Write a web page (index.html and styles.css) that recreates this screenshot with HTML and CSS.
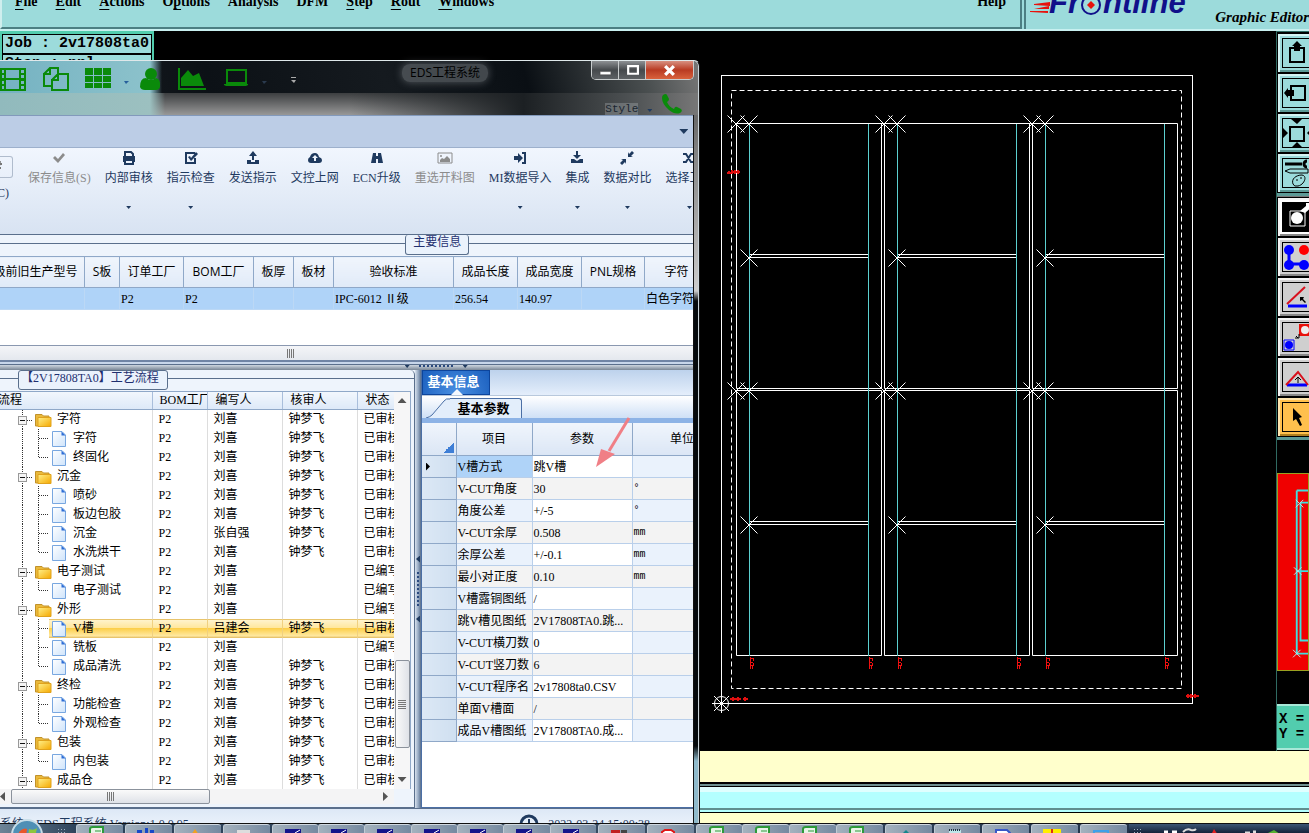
FILE: index.html
```html
<!DOCTYPE html>
<html lang="zh-CN">

<head>
    <meta charset="UTF-8">
    <meta name="viewport" content="width=device-width, initial-scale=1.0">
    <title>EDS工程系统</title>
    <link rel="stylesheet" href="styles.css">
</head>

<body>
    <!-- shared icons -->
    <svg class="defs" aria-hidden="true">
        <linearGradient id="gold" x1="0" y1="0" x2="1" y2="1">
            <stop offset="0" stop-color="#fff08a" />
            <stop offset="1" stop-color="#f5a800" />
        </linearGradient>
        <linearGradient id="paper" x1="0" y1="0" x2="1" y2="1">
            <stop offset="0" stop-color="#ffffff" />
            <stop offset="1" stop-color="#cfe4fb" />
        </linearGradient>
        <symbol id="node" viewBox="0 0 36 19">
            <path d="M4.500 0V19M9 10.500H14" stroke="#333" stroke-dasharray="1 1" />
            <rect x="0.500" y="6.500" width="8" height="8" fill="#f4f4f4" stroke="#999" />
            <path d="M2 10.500H7" stroke="#111" />
            <path d="M17.500 4.500H24L25.500 6H31V16H17.500Z" fill="#e9b93c" stroke="#c1912a" />
            <path d="M20 7.500H33V16.500H20Z" fill="url(#gold)" stroke="#e0a21c" />
        </symbol>
        <symbol id="leaf" viewBox="0 0 52 19">
            <path d="M4.500 0V19M20.500 0V19M21 9.500H30" stroke="#333" stroke-dasharray="1 1" fill="none" />
            <path d="M34.500 2.500H44L47.500 6V17.500H34.500Z" fill="url(#paper)" stroke="#78a7e0" />
            <path d="M43.500 2.500V6.500H47.500Z" fill="#2f6fd6" />
        </symbol>
        <symbol id="last" viewBox="0 0 52 19">
            <path d="M4.500 0V19M20.500 0V9.500H30" stroke="#333" stroke-dasharray="1 1" fill="none" />
            <path d="M34.500 2.500H44L47.500 6V17.500H34.500Z" fill="url(#paper)" stroke="#78a7e0" />
            <path d="M43.500 2.500V6.500H47.500Z" fill="#2f6fd6" />
        </symbol>
        <symbol id="cross" viewBox="-9 -9 18 18">
            <path d="M-8.500 -8.500L8.500 8.500M-8.500 8.500L8.500 -8.500" stroke="#fff" />
        </symbol>
        <symbol id="tag" viewBox="0 0 6 12">
            <path d="M1.500 0V12M1 1.500H5M4.500 1V4M1 5.500H4M4.500 6V9M1 8.500H5M3.500 9V12" stroke="#f01010" fill="none" />
        </symbol>
        <symbol id="doc" viewBox="0 0 20 12">
            <path d="M3 12V4Q3 2 6 2H16V12Z" fill="#e8f4e8" stroke="#2d9a3a" stroke-width="2" />
            <path d="M8 6H14" stroke="#2d9a3a" />
        </symbol>
        <symbol id="term" viewBox="0 0 20 12">
            <path d="M2 4H18V12H2Z" fill="#14148a" />
            <path d="M12 8L17 5" stroke="#fff" />
        </symbol>
    </svg>

    <!-- Graphic Editor -->
    <div class="editor">
        <header class="topbar">
            <nav class="menu">
                <a href="#"><u>F</u>ile</a>
                <a href="#"><u>E</u>dit</a>
                <a href="#"><u>A</u>ctions</a>
                <a href="#">O<u>p</u>tions</a>
                <a href="#">Analysis</a>
                <a href="#">DFM</a>
                <a href="#"><u>S</u>tep</a>
                <a href="#"><u>R</u>out</a>
                <a href="#"><u>W</u>indows</a>
                <a href="#" class="help">Help</a>
            </nav>
            <div class="brand">
                <svg class="logo" viewBox="0 0 164 18">
                    <path d="M4 4L20 2V6L4 5ZM0 11H18V13L0 12ZM4 9L19 6V9Z" fill="#e8120c" />
                    <text x="19" y="13" class="logo-text">Fr</text>
                    <circle cx="61" cy="5" r="9" fill="#a0dcdc" stroke="#10108a" stroke-width="2" />
                    <path d="M61 1L65 5L61 9L57 5Z" fill="#e8120c" />
                    <text x="73" y="13" class="logo-text">ntline</text>
                </svg>
                <span class="product">Graphic Editor</span>
            </div>
        </header>

        <main class="work">
            <div class="job">
                <p>Job : 2v17808ta0</p>
                <p>Step : pnl</p>
            </div>
            <svg class="board" viewBox="700 31 576 720" fill="none" stroke="#fff">
                <rect x="721.500" y="75.500" width="471" height="628" />
                <rect x="731.500" y="90.500" width="450" height="598" stroke-dasharray="5 3" />
                <path d="M736.500 123.500H881.500V388.500H736.500ZM884.500 123.500H1029.500V388.500H884.500ZM1032.500 123.500H1177.500V388.500H1032.500Z" />
                <path d="M736.500 390.500H881.500V655.500H736.500ZM884.500 390.500H1029.500V655.500H884.500ZM1032.500 390.500H1177.500V655.500H1032.500Z" />
                <path d="M881 123.500H885M1029 123.500H1033" />
                <path d="M749 254.500H869M749 257.500H869M897 254.500H1017M897 257.500H1017M1045 254.500H1165M1045 257.500H1165" />
                <path d="M749 521.500H869M749 524.500H869M897 521.500H1017M897 524.500H1017M1045 521.500H1165M1045 524.500H1165" />
                <path d="M749.500 124V656M868.500 124V656M897.500 124V656M1016.500 124V656M1045.500 124V656M1164.500 124V656" stroke="#5cd0d0" />
                <use href="#cross" x="727" y="115" width="18" height="18" />
                <use href="#cross" x="740" y="115" width="18" height="18" />
                <use href="#cross" x="875" y="115" width="18" height="18" />
                <use href="#cross" x="888" y="115" width="18" height="18" />
                <use href="#cross" x="1023" y="115" width="18" height="18" />
                <use href="#cross" x="1036" y="115" width="18" height="18" />
                <use href="#cross" x="727" y="382" width="18" height="18" />
                <use href="#cross" x="740" y="382" width="18" height="18" />
                <use href="#cross" x="875" y="382" width="18" height="18" />
                <use href="#cross" x="888" y="382" width="18" height="18" />
                <use href="#cross" x="1023" y="382" width="18" height="18" />
                <use href="#cross" x="1036" y="382" width="18" height="18" />
                <use href="#cross" x="740" y="249" width="18" height="18" />
                <use href="#cross" x="888" y="249" width="18" height="18" />
                <use href="#cross" x="1036" y="249" width="18" height="18" />
                <use href="#cross" x="740" y="516" width="18" height="18" />
                <use href="#cross" x="888" y="516" width="18" height="18" />
                <use href="#cross" x="1036" y="516" width="18" height="18" />
                <use href="#tag" x="749" y="657" width="6" height="12" />
                <use href="#tag" x="868" y="657" width="6" height="12" />
                <use href="#tag" x="897" y="657" width="6" height="12" />
                <use href="#tag" x="1016" y="657" width="6" height="12" />
                <use href="#tag" x="1045" y="657" width="6" height="12" />
                <use href="#tag" x="1164" y="657" width="6" height="12" />
                <path d="M727 173H731M729 171V174M732 172H740M732 170V174M735 170V174M738 170V174M1186 696H1199M1188 694V698M1191 694V698M1195 694V698M730 699H741M733 697V701M738 697V701M743 699H748M745 697V701" stroke="#e01010" stroke-width="2" />
                <circle cx="721.500" cy="703.500" r="7" />
                <path d="M712 703.500H731M721.500 694V713M714 696L729 711M714 711L729 696" />
            </svg>
            <aside class="side">
                <div class="tools">
                    <button class="tool" aria-label="Pan up"><svg viewBox="0 0 38 38"><path d="M12 14H26V28H12Z" fill="none" stroke="#000" stroke-width="2" /><path d="M14 12L19 7L24 12H22V17H16V12Z" /></svg></button>
                    <button class="tool" aria-label="Pan left"><svg viewBox="0 0 38 38"><path d="M13 12H27V26H13Z" fill="none" stroke="#000" stroke-width="2" /><path d="M6 19L10 14V16H16V22H10V24Z" /></svg></button>
                    <button class="tool" aria-label="Zoom home"><svg viewBox="0 0 38 38"><path d="M12 13H26V27H12Z" fill="none" stroke="#000" stroke-width="2" /><path d="M13 5H24L19 10ZM14 33H24L19 28ZM5 14L10 19L5 24ZM34 14L29 19L34 24Z" /></svg></button>
                    <button class="tool" aria-label="Options"><svg viewBox="0 0 38 38"><path d="M7 10H24" stroke="#000" stroke-width="3" /><path d="M29 7A3 3 0 1 0 29 13" fill="none" stroke="#000" stroke-width="3" /><path d="M7 17L12 15H30V19H12ZM15 30C13 25 18 21 24 21C30 22 26 31 20 32Q16 33 15 30M18 26H20M22 24H24" fill="none" stroke="#000" /></svg></button>
                </div>
                <div class="tools gray">
                    <button class="tool dark" aria-label="Add feature"><svg viewBox="0 0 38 38"><path d="M4 4H34V34H4Z" /><path d="M12 13H27V28H12Z" fill="#000" stroke="#fff" /><path d="M22 13L28 8V4H34V9L27 15Z" fill="#fff" /><circle cx="19" cy="20" r="6" fill="#fff" /></svg></button>
                    <button class="tool" aria-label="Nets"><svg viewBox="0 0 38 38"><path d="M11 12V26H26" fill="none" stroke="#00f" stroke-width="3" /><circle cx="11" cy="12" r="5" fill="#00f" /><circle cx="11" cy="27" r="5" fill="#00f" /><circle cx="26" cy="27" r="5" fill="#00f" /><circle cx="26" cy="12" r="5" fill="#f00" /></svg></button>
                    <button class="tool" aria-label="Angle"><svg viewBox="0 0 38 38"><path d="M10 28H29" stroke="#00f" stroke-width="3" /><path d="M9 26L27 9" stroke="#d8101c" stroke-width="2" /><path d="M22 19H26L25 21L28 24L27 25L24 22L22 23Z" /></svg></button>
                    <button class="tool" aria-label="Move"><svg viewBox="0 0 38 38"><path d="M6 22H16V32H6Z" fill="none" stroke="#00f" /><circle cx="11" cy="27" r="4" fill="#00f" /><path d="M22 7H32V17H22Z" fill="#e8120c" stroke="#e8120c" stroke-width="2" /><circle cx="27" cy="12" r="4" fill="#eee" /><path d="M17 20H21V16M18 18L20 20" stroke="#000" fill="none" /></svg></button>
                    <button class="tool" aria-label="Triangle"><svg viewBox="0 0 38 38"><path d="M9 27H29" stroke="#00f" stroke-width="3" /><path d="M8 27L20 14L30 27" fill="none" stroke="#d8101c" stroke-width="2" /><path d="M20 19V25M17 22L20 19L23 22" stroke="#000" fill="none" /></svg></button>
                    <button class="tool amber" aria-label="Select"><svg viewBox="0 0 38 38"><path d="M15 10L24 19L21 20L24 27L22 28L18 21L15 23Z" /></svg></button>
                </div>
                <svg class="overview" viewBox="0 0 32 198">
                    <path d="M20 12H32M20 12V186H32M24 25H32M24 25V172H32M20 98H32" fill="none" stroke="#3fe0e0" stroke-width="2" />
                    <path d="M19 22L27 30M19 30L27 22M17 94L25 102M17 102L25 94M16 182L24 190M16 190L24 182" stroke="#bfeaea" />
                </svg>
                <div class="coords">
                    <p>X = 0</p>
                    <p>Y = 0</p>
                </div>
            </aside>
        </main>
        <div class="input-line"></div>
        <div class="message-line"></div>
        <div class="last-line"></div>
    </div>

    <!-- EDS window -->
    <section class="eds">
        <header class="title-bar">
            <svg class="quick" viewBox="0 0 310 34" fill="#0a8a0a">
                <path d="M0 7H26V30H0ZM2 9V12H4V9ZM2 14V17H4V14ZM2 20V23H4V20ZM2 25V28H4V25ZM6 9V17H19V9ZM6 19V28H19V19ZM21 9V12H24V9ZM21 14V17H24V14ZM21 20V23H24V20ZM21 25V28H24V25Z" fill-rule="evenodd" />
                <path d="M44 13L50 7H58V13M50 7V13H44V25H52M52 19L58 13H68V29H52V19H58V13" fill="none" stroke="#0a8a0a" stroke-width="2" />
                <path d="M85 7H93V14H85ZM94 7H102V14H94ZM103 7H111V14H103ZM85 15H93V21H85ZM94 15H102V21H94ZM103 15H111V21H103ZM85 22H93V27H85ZM94 22H102V27H94ZM103 22H111V27H103Z" />
                <circle cx="151" cy="13" r="6" />
                <path d="M140 26Q140 17 146 17Q151 21 156 17Q161 18 160 26Q159 29 156 29H145Q141 29 140 26Z" />
                <path d="M178 7H180V27H206V29H178ZM181 25V17L188 9L193 15L199 12L204 25Z" />
                <path d="M227 9H246V22H227Z" fill="none" stroke="#0a8a0a" stroke-width="2" />
                <path d="M224 23H248V24L246 25H226L224 24Z" />
                <path d="M124 20H129L126 23Z" fill="#27609c" />
                <path d="M262 20H267L264 23Z" fill="#2a3a4e" />
                <path d="M291 16H296V17H291ZM291 19H296L294 22Z" fill="#aaa" />
            </svg>
            <h1>EDS工程系统</h1>
            <div class="caption-buttons">
                <button aria-label="最小化"><svg viewBox="0 0 12 12"><path d="M1 7H11V10H1Z" fill="#fff" stroke="#444" stroke-width="0.500" /></svg></button>
                <button aria-label="最大化"><svg viewBox="0 0 12 12"><path d="M2 2H11V9H2Z" fill="none" stroke="#fff" stroke-width="2" /></svg></button>
                <button class="close" aria-label="关闭"><svg viewBox="0 0 12 12"><path d="M2 2L10 10M10 2L2 10" stroke="#fff" stroke-width="3" /></svg></button>
            </div>
            <div class="style-picker">
                <span>Style</span>
                <i class="caret"></i>
                <svg class="phone" viewBox="0 0 22 22"><path d="M2 2Q5 0 6 2L8 6Q8 8 6 9Q8 14 13 16Q14 13 16 14L20 16Q22 18 19 20Q14 22 8 17Q1 11 1 5Q1 3 2 2Z" fill="#0a8a0a" /></svg>
            </div>
        </header>

        <div class="client">
            <div class="ribbon-tabs"><i class="caret big"></i></div>
            <div class="ribbon">
                <div class="refresh"><button aria-label="刷新"><svg viewBox="0 0 14 14"><path d="M1 4H10M8 1L6 12M3 8H9" fill="none" stroke="#777" stroke-width="2" /></svg></button><span>(C)</span></div>
                <button class="cmd off"><svg viewBox="0 0 16 16"><path d="M2 8L4 6L7 9L12 3L14 5L7 13Z" /></svg><span>保存信息(S)</span></button>
                <button class="cmd"><svg viewBox="0 0 16 16"><path d="M4 7V2H10L12 4V7M4 10H12V14H4Z" fill="none" stroke="#1f3a5f" stroke-width="2" /><path d="M2 6H14V12H12V9H4V12H2Z" /></svg><span>内部审核</span><i class="caret"></i></button>
                <button class="cmd"><svg viewBox="0 0 16 16"><path d="M12 8V13H3V3H12" fill="none" stroke="#1f3a5f" stroke-width="2" /><path d="M5 7L7 6L8 8L13 2L15 4L8 11Z" /></svg><span>指示检查</span><i class="caret"></i></button>
                <button class="cmd"><svg viewBox="0 0 16 16"><path d="M8 1L12 6H9V10H7V6H4ZM2 10H6V12H10V10H14V14H2Z" /></svg><span>发送指示</span></button>
                <button class="cmd"><svg viewBox="0 0 16 16"><path d="M4 13Q1 13 1 10Q1 8 3 7Q4 3 8 3Q11 3 12 7Q15 8 15 10Q15 13 12 13ZM8 5L5 8H7V11H9V8H11Z" fill-rule="evenodd" /></svg><span>文控上网</span></button>
                <button class="cmd"><svg viewBox="0 0 16 16"><path d="M4 3H7V6H9V3H12L14 13H9V9H7V13H2Z" /></svg><span>ECN升级</span></button>
                <button class="cmd off"><svg viewBox="0 0 16 16"><path d="M1 3H15V13H1Z" fill="none" stroke="#8c8c8c" /><path d="M3 12V10L5 8L7 9L10 6L13 9V12Z" /><circle cx="4" cy="6" r="1" /></svg><span>重选开料图</span></button>
                <button class="cmd"><svg viewBox="0 0 16 16"><path d="M2 6H6V3L11 8L6 13V10H2ZM10 2H14V14H10V12H12V4H10Z" /></svg><span>MI数据导入</span><i class="caret"></i></button>
                <button class="cmd"><svg viewBox="0 0 16 16"><path d="M7 1H9V5H12L8 9L4 5H7ZM2 9H5L8 11L11 9H14V13H2Z" /></svg><span>集成</span><i class="caret"></i></button>
                <button class="cmd"><svg viewBox="0 0 16 16"><path d="M9 2L10 4L13 1L15 3L12 6L14 7H9ZM7 9V14L6 12L3 15L1 13L4 10L2 9Z" /></svg><span>数据对比</span><i class="caret"></i></button>
                <button class="cmd"><svg viewBox="0 0 16 16"><path d="M2 4H5L10 12H14M2 12H5L10 4H14" fill="none" stroke="#1f3a5f" stroke-width="2" /></svg><span>选择工序</span><i class="caret"></i></button>
            </div>

            <div class="group-head"><span class="group-title">主要信息</span></div>
            <div class="main-info">
                <table class="info">
                    <thead>
                        <tr><th>升级前旧生产型号</th><th>S板</th><th>订单工厂</th><th>BOM工厂</th><th>板厚</th><th>板材</th><th>验收标准</th><th>成品长度</th><th>成品宽度</th><th>PNL规格</th><th>字符</th></tr>
                    </thead>
                    <tbody>
                        <tr><td></td><td></td><td>P2</td><td>P2</td><td></td><td></td><td>IPC-6012 Ⅱ级</td><td>256.54</td><td>140.97</td><td></td><td>白色字符</td></tr>
                    </tbody>
                </table>
            </div>
            <div class="scroll-x wide"><i class="grip"></i></div>
            <div class="splitter"><i class="caret"></i><i class="dots"></i><i class="caret"></i></div>

            <div class="panes">
                <section class="flow">
                    <div class="group-head"><span class="group-title">【2V17808TA0】工艺流程</span></div>
                    <div class="flow-body">
                        <table class="tree">
                            <thead>
                                <tr><th>工艺流程</th><th>BOM工厂</th><th>编写人</th><th>核审人</th><th>状态</th></tr>
                            </thead>
                            <tbody>
                                <tr><td><svg class="node"><use href="#node" /></svg>字符</td><td>P2</td><td>刘喜</td><td>钟梦飞</td><td>已审核</td></tr>
                                <tr><td><svg class="leaf"><use href="#leaf" /></svg>字符</td><td>P2</td><td>刘喜</td><td>钟梦飞</td><td>已审核</td></tr>
                                <tr><td><svg class="leaf"><use href="#last" /></svg>终固化</td><td>P2</td><td>刘喜</td><td>钟梦飞</td><td>已审核</td></tr>
                                <tr><td><svg class="node"><use href="#node" /></svg>沉金</td><td>P2</td><td>刘喜</td><td>钟梦飞</td><td>已审核</td></tr>
                                <tr><td><svg class="leaf"><use href="#leaf" /></svg>喷砂</td><td>P2</td><td>刘喜</td><td>钟梦飞</td><td>已审核</td></tr>
                                <tr><td><svg class="leaf"><use href="#leaf" /></svg>板边包胶</td><td>P2</td><td>刘喜</td><td>钟梦飞</td><td>已审核</td></tr>
                                <tr><td><svg class="leaf"><use href="#leaf" /></svg>沉金</td><td>P2</td><td>张自强</td><td>钟梦飞</td><td>已审核</td></tr>
                                <tr><td><svg class="leaf"><use href="#last" /></svg>水洗烘干</td><td>P2</td><td>刘喜</td><td>钟梦飞</td><td>已审核</td></tr>
                                <tr><td><svg class="node"><use href="#node" /></svg>电子测试</td><td>P2</td><td>刘喜</td><td></td><td>已编写</td></tr>
                                <tr><td><svg class="leaf"><use href="#last" /></svg>电子测试</td><td>P2</td><td>刘喜</td><td></td><td>已编写</td></tr>
                                <tr><td><svg class="node"><use href="#node" /></svg>外形</td><td>P2</td><td>刘喜</td><td></td><td>已编写</td></tr>
                                <tr class="selected"><td><svg class="leaf"><use href="#leaf" /></svg>V槽</td><td>P2</td><td>吕建会</td><td>钟梦飞</td><td>已审核</td></tr>
                                <tr><td><svg class="leaf"><use href="#leaf" /></svg>铣板</td><td>P2</td><td>刘喜</td><td></td><td>已编写</td></tr>
                                <tr><td><svg class="leaf"><use href="#last" /></svg>成品清洗</td><td>P2</td><td>刘喜</td><td>钟梦飞</td><td>已审核</td></tr>
                                <tr><td><svg class="node"><use href="#node" /></svg>终检</td><td>P2</td><td>刘喜</td><td>钟梦飞</td><td>已审核</td></tr>
                                <tr><td><svg class="leaf"><use href="#leaf" /></svg>功能检查</td><td>P2</td><td>刘喜</td><td>钟梦飞</td><td>已审核</td></tr>
                                <tr><td><svg class="leaf"><use href="#last" /></svg>外观检查</td><td>P2</td><td>刘喜</td><td>钟梦飞</td><td>已审核</td></tr>
                                <tr><td><svg class="node"><use href="#node" /></svg>包装</td><td>P2</td><td>刘喜</td><td>钟梦飞</td><td>已审核</td></tr>
                                <tr><td><svg class="leaf"><use href="#last" /></svg>内包装</td><td>P2</td><td>刘喜</td><td>钟梦飞</td><td>已审核</td></tr>
                                <tr><td><svg class="node"><use href="#node" /></svg>成品仓</td><td>P2</td><td>刘喜</td><td>钟梦飞</td><td>已审核</td></tr>
                            </tbody>
                        </table>
                        <div class="scroll-y"><i class="arrow up"></i><div class="thumb"><i class="grip"></i></div><i class="arrow down"></i></div>
                    </div>
                    <div class="scroll-x"><i class="arrow left"></i><div class="thumb"><i class="grip"></i></div><i class="arrow right"></i></div>
                </section>
                <div class="splitter vertical"><i class="caret"></i><i class="dots"></i><i class="caret"></i></div>
                <section class="detail">
                    <div class="tabs"><button class="tab">基本信息</button></div>
                    <div class="subtabs">
                        <svg class="slant" viewBox="0 0 24 20"><path d="M0 20L4 19L18 3Q20 0 24 0V20Z" fill="#e3eefb" /><path d="M0 20Q4 19 6 17L18 3Q20 0 24 1" fill="none" stroke="#4b6fa5" /></svg>
                        <button class="subtab">基本参数</button>
                    </div>
                    <table class="params">
                        <thead>
                            <tr><th></th><th>项目</th><th>参数</th><th>单位</th></tr>
                        </thead>
                        <tbody>
                            <tr class="current"><td><i class="marker"></i></td><td>V槽方式</td><td>跳V槽</td><td></td></tr>
                            <tr><td></td><td>V-CUT角度</td><td>30</td><td>°</td></tr>
                            <tr><td></td><td>角度公差</td><td>+/-5</td><td>°</td></tr>
                            <tr><td></td><td>V-CUT余厚</td><td>0.508</td><td>mm</td></tr>
                            <tr><td></td><td>余厚公差</td><td>+/-0.1</td><td>mm</td></tr>
                            <tr><td></td><td>最小对正度</td><td>0.10</td><td>mm</td></tr>
                            <tr><td></td><td>V槽露铜图纸</td><td>/</td><td></td></tr>
                            <tr><td></td><td>跳V槽见图纸</td><td>2V17808TA0.跳...</td><td></td></tr>
                            <tr><td></td><td>V-CUT横刀数</td><td>0</td><td></td></tr>
                            <tr><td></td><td>V-CUT竖刀数</td><td>6</td><td></td></tr>
                            <tr><td></td><td>V-CUT程序名</td><td>2v17808ta0.CSV</td><td></td></tr>
                            <tr><td></td><td>单面V槽面</td><td>/</td><td></td></tr>
                            <tr><td></td><td>成品V槽图纸</td><td>2V17808TA0.成...</td><td></td></tr>
                        </tbody>
                    </table>
                    <svg class="pointer" viewBox="0 0 36 52"><path d="M34 1L14 34" stroke="#f07f86" stroke-width="3" /><path d="M1 50L6 32L20 37Z" fill="#f07f86" /></svg>
                </section>
            </div>
            <footer class="status">
                <span>系统：EDS工程系统 Version:1.0.0.95</span>
                <svg class="clock" viewBox="0 0 20 20"><circle cx="10" cy="10" r="8" fill="none" stroke="#1f3a5f" stroke-width="3" /><path d="M10 5V11H14" fill="none" stroke="#1f3a5f" stroke-width="2" /></svg>
                <time>2022-03-24 15:00:38</time>
            </footer>
        </div>
    </section>

    <!-- taskbar -->
    <div class="taskbar">
        <button class="orb" aria-label="开始"><svg viewBox="0 0 32 32"><circle cx="16" cy="16" r="15" fill="#4f8fb5" stroke="#c7dde8" stroke-width="2" /><path d="M8 13Q12 8 16 10L15 18H7Z" fill="#e8572a" /><path d="M18 10Q23 12 26 9L24 18H17Z" fill="#8cc63e" /></svg></button>
        <i class="dots"></i>
        <button class="task" aria-label="表格"><svg><use href="#doc" /></svg></button>
        <button class="task" aria-label="存储"><svg viewBox="0 0 20 12"><path d="M1 5H6V12H1ZM9 3H12V12H9ZM14 5H18V12H14Z" fill="#1848c8" /></svg></button>
        <button class="task" aria-label="播放器"><svg viewBox="0 0 20 12"><path d="M10 4L14 10H6Z" fill="#f0a020" /></svg></button>
        <button class="task" aria-label="文档"><svg viewBox="0 0 20 12"><path d="M3 5H16V12H3Z" fill="#ddd" /></svg></button>
        <div class="group">
            <button class="task" aria-label="终端 1"><svg><use href="#term" /></svg></button>
            <button class="task" aria-label="终端 2"><svg><use href="#term" /></svg></button>
            <button class="task" aria-label="终端 3"><svg><use href="#term" /></svg></button>
            <button class="task" aria-label="终端 4"><svg><use href="#term" /></svg></button>
            <button class="task" aria-label="终端 5"><svg><use href="#term" /></svg></button>
            <button class="task" aria-label="终端 6"><svg><use href="#term" /></svg></button>
            <button class="task" aria-label="终端 7"><svg><use href="#term" /></svg></button>
        </div>
        <button class="task" aria-label="图形"><svg viewBox="0 0 20 12"><path d="M2 5H11V12H2Z" fill="#c02020" /><path d="M12 5H18V12H12Z" fill="#444" /></svg></button>
        <button class="task" aria-label="阅读器"><svg viewBox="0 0 20 12"><path d="M4 12V7L7 5H13L16 7V12Z" fill="#fff" stroke="#e01818" stroke-width="2" /></svg></button>
        <div class="group small">
            <button class="task" aria-label="表格 1"><svg><use href="#doc" /></svg></button>
            <button class="task" aria-label="表格 2"><svg><use href="#doc" /></svg></button>
            <button class="task" aria-label="表格 3"><svg><use href="#doc" /></svg></button>
            <button class="task" aria-label="表格 4"><svg><use href="#doc" /></svg></button>
        </div>
        <button class="task" aria-label="工具"><svg viewBox="0 0 20 12"><path d="M10 5L14 9H6Z" fill="#13868c" /></svg></button>
        <button class="task" aria-label="记事本"><svg viewBox="0 0 20 12"><path d="M4 5H16V12H4Z" fill="#bfe6ea" /><path d="M4 5H16" stroke="#234" stroke-dasharray="1 1" stroke-width="2" /></svg></button>
        <button class="task" aria-label="文字"><svg viewBox="0 0 20 12"><path d="M3 5H14L17 8V12H3Z" fill="#fff" stroke="#3858c8" stroke-width="2" /></svg></button>
        <button class="task" aria-label="CAM"><svg viewBox="0 0 20 12"><path d="M1 4H19V12H1Z" fill="#ffee00" /><path d="M10 4V12" stroke="#e03010" stroke-width="2" /></svg></button>
        <button class="task" aria-label="截图"><svg viewBox="0 0 20 12"><path d="M3 6H17V12H3Z" fill="none" stroke="#3fa0e8" stroke-width="2" /></svg></button>
        <div class="tray">
            <i class="dots"></i>
            <svg viewBox="0 0 150 12"><path d="M14 8H18M22 8H27" stroke="#fff" stroke-width="3" /><path d="M33 8Q37 4 41 6Q44 7 46 5" stroke="#ddd" fill="none" stroke-width="2" /><path d="M64 5L68 11H61Z" fill="#e02020" /><path d="M95 9H100M103 8H106" stroke="#ddd" stroke-width="3" /><path d="M118 9L124 6L130 10V12H116Z" fill="#56b030" /></svg>
        </div>
    </div>
</body>

</html>
```
FILE: styles.css
```css
* {
    box-sizing: border-box;
}

body {
    margin: 0;
    height: 100vh;
    overflow: hidden;
    background: #000;
    font: 12px/16px "Liberation Serif", "Noto Sans CJK SC", serif;
    color: #000;
}

p, h1 {
    margin: 0;
}

button {
    margin: 0;
    padding: 0;
    border: none;
    background: none;
    font: inherit;
    color: inherit;
}

svg {
    display: block;
}

i {
    display: block;
}

table {
    border-collapse: collapse;
    table-layout: fixed;
}

th, td {
    padding: 0;
    white-space: nowrap;
    overflow: hidden;
    font-weight: normal;
    text-align: left;
}

.defs {
    position: absolute;
    width: 0;
    height: 0;
}

/* Graphic Editor */
.editor {
    display: flex;
    flex-direction: column;
    height: 100vh;
}

.topbar {
    display: flex;
    height: 31px;
    flex: none;
    border-bottom: 2px solid #c8f0f0;
    background: #9cdbdb;
}

.menu {
    flex: 1;
    display: flex;
    gap: 18px;
    padding: 0 14px 0 13px;
    border-left: 2px solid #cfeeee;
    border-right: 2px solid #4c7f83;
    border-bottom: 2px solid #4c7f83;
    height: 29px;
    overflow: hidden;
}

.menu a {
    margin-top: -6px;
    font-size: 14px;
    font-weight: bold;
    color: #000;
    text-decoration: none;
}

.menu u {
    text-underline-offset: 3px;
}

.menu .help {
    margin-left: auto;
}

.brand {
    width: 285px;
    display: flex;
    justify-content: space-between;
    margin-left: 2px;
    padding-left: 4px;
    border-left: 2px solid #4c7f83;
}

.logo {
    width: 164px;
    height: 18px;
    flex: none;
}

.logo-text {
    font: italic bold 31px "Liberation Sans", sans-serif;
    fill: #10108a;
}

.product {
    align-self: flex-end;
    margin-bottom: 3px;
    font: italic bold 15px/18px "Liberation Serif", serif;
    white-space: nowrap;
}

.work {
    flex: 1;
    display: flex;
    min-height: 0;
    overflow: hidden;
}

.job {
    width: 154px;
    height: 60px;
    padding: 3px 2px;
    background: #52cdae;
    font: bold 15px/18px "Liberation Mono", monospace;
    white-space: nowrap;
}

.job p {
    height: 20px;
    padding-left: 2px;
    border: 1px solid #000;
    background: #9cdbdb;
}

.board {
    width: 576px;
    height: 720px;
    margin-left: auto;
    flex: none;
}

.side {
    width: 33px;
    flex: none;
    overflow: hidden;
    border-left: 1px solid #2f6a62;
}

.tools {
    width: 44px;
    display: flex;
    flex-direction: column;
    gap: 2px;
    padding: 2px 1px 1px;
    border-top: 1px solid #2f6a62;
    border-bottom: 3px solid #5c9a96;
    background: #000;
}

.tool {
    width: 38px;
    height: 38px;
    background: #9cdbdb;
    box-shadow: inset 2px 2px #d5f4f4, inset -2px -2px #5c9a96;
}

.tool svg {
    width: 38px;
    height: 38px;
    outline: 1px solid #000;
    outline-offset: -5px;
}

.gray {
    border-top-color: #777;
    padding-top: 1px;
}

.gray .tool {
    background: #cfcfcf;
    box-shadow: inset 2px 2px #f5f5f5, inset -2px -2px #888;
}

.gray .dark {
    background: #fff;
}

.gray .amber {
    background: #ffc04d;
    box-shadow: inset 2px 2px #ffe6b0, inset -2px -2px #b07f20;
}

.overview {
    width: 32px;
    height: 198px;
    margin-top: 33px;
    background: #f00000;
    border: 1px solid #9aa020;
}

.coords {
    width: 60px;
    height: 46px;
    margin-top: 33px;
    padding: 6px 2px;
    border-top: 2px solid #a8e8d8;
    border-bottom: 2px solid #a8e8d8;
    background: #52cdae;
    font: bold 14px/15px "Liberation Mono", monospace;
    white-space: nowrap;
}

.input-line {
    height: 31px;
    flex: none;
    background: #ffffcc;
}

.message-line {
    height: 31px;
    flex: none;
    border-top: 2px solid #000;
    border-bottom: 1px solid #000;
    background: linear-gradient(#6d9090 2px, #000 2px 3px, #dfffff 3px 8px, #b3ffff 8px 24px, #5f8f8f 24px 26px, #b3ffff 26px);
}

.last-line {
    height: 20px;
    flex: none;
    background: #ffffcc;
}

/* EDS window */
.eds {
    position: absolute;
    top: 60px;
    left: 0;
    bottom: 0;
    width: 53.5%;
    display: flex;
    flex-direction: column;
    padding-right: 5px;
    border-top: 1px solid #dfe8ea;
    border-right: 1px solid #111;
    border-radius: 0 6px 0 0;
    background: linear-gradient(#6c6c6c 60px, #888 100px, #ccc 230px, #05090c 240px 685px, #8fbacb 700px);
    box-shadow: inset -1px 0 #c9d3d8;
}

.title-bar {
    position: relative;
    height: 54px;
    flex: none;
    margin-right: -4px;
    border-radius: 0 6px 0 0;
    background:
        linear-gradient(90deg, #75b2c2, #8cc2cb 150px, transparent 162px) 0 0 / 100% 32px no-repeat,
        linear-gradient(90deg, #91babd, #9cc0c0 150px, transparent 165px) 0 32px / 100% 22px no-repeat,
        linear-gradient(75deg, #1d2226, #0c1116 30%, #151a1f 55%, #0a0f14 75%, #4a4f50 92%, #777) 0 0 / 100% 32px no-repeat,
        linear-gradient(90deg, transparent 50%, #1c2023 75%, #4c5052 90%, #777) 0 32px / 100% 22px no-repeat,
        linear-gradient(#3c3e40, #989898) 0 32px / 100% 22px no-repeat;
}

.quick {
    width: 310px;
    height: 34px;
}

.title-bar h1 {
    position: absolute;
    top: 3px;
    left: 402px;
    padding: 0 8px;
    border-radius: 8px;
    background: rgba(190, 195, 200, 0.3);
    box-shadow: 0 0 8px rgba(190, 195, 200, 0.4);
    font: 12px/18px "Open Sans", "Noto Sans CJK SC", sans-serif;
}

.caption-buttons {
    position: absolute;
    top: 0;
    right: 4px;
    display: flex;
    height: 19px;
    border: 1px solid #c8cccd;
    border-top: none;
    border-radius: 0 0 5px 5px;
    overflow: hidden;
}

.caption-buttons button {
    width: 27px;
    display: flex;
    align-items: center;
    justify-content: center;
    border-right: 1px solid #c8cccd;
    background: linear-gradient(#8d9093, #45494c 50%, #5d6164);
}

.caption-buttons .close {
    width: 47px;
    border-right: none;
    background: linear-gradient(#d89080, #b93a22 50%, #d9623c);
}

.caption-buttons svg {
    width: 13px;
    height: 13px;
}

.style-picker {
    position: absolute;
    right: 15px;
    bottom: 0;
    display: flex;
    align-items: flex-end;
    gap: 9px;
    height: 22px;
    color: #1a2530;
    font: 11px/12px "Liberation Mono", monospace;
}

.style-picker span {
    background: rgba(190, 195, 200, 0.3);
}

.style-picker .caret {
    margin-bottom: 3px;
}

.phone {
    width: 22px;
    height: 22px;
}

.caret {
    flex: none;
    width: 5px;
    height: 3px;
    background: #1f3a5f;
    clip-path: polygon(0 0, 100% 0, 50% 100%);
}

.caret.big {
    width: 9px;
    height: 5px;
}

.client {
    flex: 1;
    min-height: 0;
    display: flex;
    flex-direction: column;
    overflow: hidden;
    border-right: 1px solid #111;
    background: #eef4fc;
}

.ribbon-tabs {
    height: 33px;
    flex: none;
    display: flex;
    align-items: center;
    justify-content: flex-end;
    padding-right: 5px;
    border-top: 1px solid #8299bb;
    border-bottom: 1px solid #9db0cc;
    background: #bccde6;
}

.ribbon {
    height: 87px;
    flex: none;
    display: flex;
    gap: 14px;
    border-bottom: 1px solid #5a6f8c;
    background: linear-gradient(#f1f6fe, #d8e3f2);
    color: #1f3a5f;
}

.refresh {
    width: 14px;
    flex: none;
    padding-top: 8px;
}

.refresh span {
    display: block;
    margin: 4px 0 0 -7px;
}

.refresh button {
    width: 13px;
    height: 22px;
    padding-left: 0;
    border: 1px solid #b0bccd;
    border-left: none;
    border-radius: 0 3px 3px 0;
    overflow: hidden;
}

.refresh svg {
    width: 14px;
    height: 14px;
    margin-left: -8px;
}

.cmd {
    display: flex;
    flex-direction: column;
    align-items: center;
    flex: none;
    padding-top: 2px;
    white-space: nowrap;
    fill: #1f3a5f;
}

.cmd svg {
    width: 16px;
    height: 16px;
}

.cmd span {
    margin-top: 4px;
    line-height: 16px;
}

.cmd .caret {
    margin-top: 20px;
}

.off {
    color: #8c8c8c;
    fill: #8c8c8c;
}

.group-head {
    height: 21px;
    flex: none;
    display: flex;
    justify-content: center;
    background: linear-gradient(#5a6f8c, #5a6f8c) 0 8px / 100% 1px no-repeat;
}

.group-title {
    height: 20px;
    margin-left: 181px;
    padding: 0 7px;
    border: 1px solid #5a6f8c;
    border-top: none;
    border-radius: 3px;
    background: #eaf2fc;
    line-height: 15px;
    color: #1f3070;
}

.main-info {
    height: 89px;
    flex: none;
    overflow: hidden;
    background: #fff;
}

.info {
    width: 734px;
    margin-left: -26px;
}

.info th {
    width: 64px;
    height: 31px;
    border: 1px solid #8fa8c8;
    background: linear-gradient(#f0f5fc, #e0eaf8);
    font: 12px/16px "Open Sans", "Noto Sans CJK SC", sans-serif;
    text-align: center;
}

.info th:nth-child(1) {
    width: 110px;
}

.info th:nth-child(2) {
    width: 35px;
}

.info th:nth-child(4) {
    width: 70px;
}

.info th:nth-child(5),
.info th:nth-child(6) {
    width: 40px;
}

.info th:nth-child(7) {
    width: 120px;
}

.info th:nth-child(10) {
    width: 63px;
}

.info td {
    height: 22px;
    padding-left: 1px;
    border: 1px solid #bcd8f5;
    background: #afd3f8;
}

.scroll-x {
    display: flex;
    align-items: center;
    height: 15px;
    flex: none;
    background: #f4f4f5;
}

.scroll-x.wide {
    justify-content: center;
    padding-right: 111px;
    border-top: 1px solid #8a98b0;
    background: linear-gradient(#f4f5f8, #e4e8ee);
}

.scroll-x .thumb {
    width: 199px;
    margin-left: 6px;
}

.thumb {
    display: flex;
    align-items: center;
    justify-content: center;
    height: 15px;
    border: 1px solid #8b929c;
    border-radius: 2px;
    background: linear-gradient(#fafafa, #dfe2e8);
}

.grip {
    width: 8px;
    height: 9px;
    background: repeating-linear-gradient(90deg, #777 0 1px, transparent 1px 2px);
}

.scroll-y .grip {
    background: repeating-linear-gradient(#777 0 1px, transparent 1px 2px);
}

.arrow {
    width: 9px;
    height: 5px;
    background: #555;
    clip-path: polygon(0 0, 100% 0, 50% 100%);
}

.arrow.up {
    clip-path: polygon(0 100%, 100% 100%, 50% 0);
}

.arrow.left {
    width: 5px;
    height: 9px;
    clip-path: polygon(0 50%, 100% 0, 100% 100%);
}

.arrow.right {
    width: 5px;
    height: 9px;
    margin-left: auto;
    margin-right: 6px;
    clip-path: polygon(0 0, 100% 50%, 0 100%);
}

.splitter {
    display: flex;
    justify-content: center;
    align-items: flex-start;
    gap: 9px;
    height: 10px;
    flex: none;
    padding: 3px 0 0 179px;
    border-top: 2px solid #6f84a5;
    background: linear-gradient(#c7d6ea 2px, #5a6f8c 2px 3px, #cdd6e0 3px, #7a8796);
}

.dots {
    width: 35px;
    height: 2px;
    background: repeating-linear-gradient(90deg, #2b4a7f 0 2px, transparent 2px 4px);
}

.panes {
    flex: 1;
    min-height: 0;
    display: flex;
}

.flow {
    width: 415px;
    flex: none;
    display: flex;
    flex-direction: column;
    border-right: 1px solid #5a6f8c;
    border-bottom: 1px solid #5a6f8c;
    border-radius: 0 5px 0 0;
}

.flow .group-head {
    justify-content: flex-start;
}

.flow .group-title {
    margin-left: 18px;
    padding: 0 8px 0 2px;
    border-top: 1px solid #5a6f8c;
}

.flow-body {
    display: flex;
    height: 398px;
    margin-right: 3px;
    overflow: hidden;
    border-top: 1px solid #8fa8c8;
    border-right: 1px solid #8fa8c8;
    background: #fff;
}

.flow > .scroll-x {
    margin-right: 20px;
}

.tree {
    width: 424px;
    margin-left: -30px;
    flex: none;
    align-self: flex-start;
}

.tree th {
    width: 75px;
    height: 17px;
    padding-left: 8px;
    border-right: 1px solid #a9bedb;
    border-bottom: 1px solid #8fa8c8;
    background: linear-gradient(#f2f7fd, #dde9f8);
    line-height: 16px;
}

.tree th:nth-child(1) {
    width: 182px;
    padding-left: 4px;
}

.tree th:nth-child(2) {
    width: 55px;
    padding-left: 7px;
}

.tree th:nth-child(5) {
    width: 37px;
}

.tree td {
    height: 19px;
    padding-left: 6px;
    border-right: 1px solid #ddd;
    line-height: 19px;
}

.tree td:first-child {
    padding-left: 48px;
}

.tree th:last-child,
.tree td:last-child {
    border-right: none;
    text-overflow: clip;
}

.tree svg {
    float: left;
    height: 19px;
}

.node {
    width: 36px;
    margin-right: 3px;
}

.leaf {
    width: 52px;
    margin-right: 3px;
}

.selected td {
    border-right-color: #f0d080;
    background: linear-gradient(#e8c46c 1px, #fff3cc 1px, #ffe79e 45%, #fccf4b 50%, #ffe9a4 90%, #e8c46c 95%);
}

.selected td:first-child {
    background-position: 79px 0;
    background-repeat: no-repeat;
}

.scroll-y {
    flex: 1;
    display: flex;
    flex-direction: column;
    align-items: center;
    padding: 6px 0 7px;
    background: #f6f6f7;
}

.scroll-y .thumb {
    width: 15px;
    height: 88px;
    margin: auto 0 29px;
    background: linear-gradient(90deg, #fafafa, #dfe2e8);
}

.vertical {
    flex-direction: column;
    justify-content: center;
    align-items: center;
    width: 6px;
    height: auto;
    padding: 0;
    border: none;
    background: linear-gradient(90deg, #d8e2ee, #8fa3bd 60%, #5a6f8c);
}

.vertical .caret {
    width: 4px;
    height: 7px;
    clip-path: polygon(0 50%, 100% 0, 100% 100%);
}

.vertical .dots {
    width: 2px;
    height: 35px;
    background: repeating-linear-gradient(#2b4a7f 0 2px, transparent 2px 4px);
}

.detail {
    position: relative;
    flex: 1;
    min-width: 0;
    overflow: hidden;
    border-left: 1px solid #4b6fa5;
    border-bottom: 1px solid #4b6fa5;
    background: #fff;
}

.tabs {
    height: 26px;
    border-bottom: 1px solid #b8c8dc;
    background: linear-gradient(#bdd2ec, #e4eefb);
}

.tab {
    position: relative;
    width: 68px;
    height: 25px;
    padding: 0 5px 3px 0;
    border: 1px solid #0d459c;
    background: radial-gradient(circle at 50% 100%, #4a90e2, #1b5fbe);
    font: bold 13px/16px "Noto Sans CJK SC", sans-serif;
    color: #fff;
}

.tab::after {
    content: "";
    position: absolute;
    left: 28px;
    bottom: -1px;
    border: 6px solid transparent;
    border-top: none;
    border-bottom-color: #f4f8fe;
}

.subtabs {
    display: flex;
    align-items: flex-end;
    height: 27px;
    padding-left: 4px;
    border-bottom: 5px solid #8db3e6;
    background: linear-gradient(#fff, #cfe0f6);
}

.slant {
    width: 24px;
    height: 20px;
}

.subtab {
    width: 72px;
    height: 20px;
    padding: 0 4px 2px 0;
    border-top: 1px solid #4b6fa5;
    border-right: 1px solid #4b6fa5;
    border-radius: 0 3px 0 0;
    background: #e3eefb;
    font: bold 13px/16px "Noto Sans CJK SC", sans-serif;
}

.params {
    width: 310px;
}

.params th {
    height: 32px;
    width: 100px;
    border-right: 1px solid #8fa8c8;
    border-bottom: 1px solid #8fa8c8;
    background: linear-gradient(#f0f5fc, #dbe6f5);
    text-align: center;
    font: 12px/16px "Open Sans", "Noto Sans CJK SC", sans-serif;
}

.params th:nth-child(1) {
    width: 34px;
    background: linear-gradient(135deg, transparent 50%, #3f7fd6 50%) right 2px bottom 2px / 11px 11px no-repeat, linear-gradient(#f0f5fc, #dbe6f5);
}

.params th:nth-child(2) {
    width: 76px;
}

.params td {
    height: 22px;
    padding: 1px 0 0 1px;
    border-right: 1px solid #b9cfea;
    border-bottom: 1px solid #b9cfea;
    background: #eaf2fc;
    line-height: 20px;
}

.params td:nth-child(3) {
    background: #fff;
}

.params td:nth-child(4) {
    font-family: "Liberation Mono", monospace;
    font-size: 10px;
}

.params tr:nth-child(even) td {
    background: #f3f3f3;
}

.params tr td:first-child,
.params tr:nth-child(even) td:first-child {
    padding-left: 4px;
    border-color: #8fa8c8;
    background: linear-gradient(90deg, #dce8f5, #cfdff0);
}

.params .current td:nth-child(2) {
    background: #afd3f8;
}

.marker {
    width: 4px;
    height: 8px;
    background: #000;
    clip-path: polygon(0 0, 100% 50%, 0 100%);
}

.pointer {
    position: absolute;
    left: 173px;
    top: 47px;
    width: 36px;
    height: 52px;
}

.status {
    height: 25px;
    flex: none;
    display: flex;
    align-items: center;
    padding: 6px 30px 0 0;
    border-top: 1px solid #5a6f8c;
    background: linear-gradient(#dde8f6, #f0f6fd);
    color: #1f3a5f;
    white-space: nowrap;
}

.clock {
    width: 20px;
    height: 20px;
    margin-left: auto;
}

.status time {
    margin-left: 9px;
    width: 115px;
}

/* taskbar */
.taskbar {
    position: absolute;
    left: 0;
    right: 0;
    bottom: 0;
    height: 10px;
    display: flex;
    gap: 2px;
    border-top: 1px solid #111;
    background: linear-gradient(90deg, #6d8497, #2a3f57 80px, #394d63 50%, #1b2a40);
}

.orb {
    width: 30px;
    height: 32px;
    margin: -5px 10px 0 11px;
    flex: none;
}

.orb svg {
    width: 32px;
    height: 32px;
}

.taskbar .dots {
    width: 9px;
    height: 6px;
    margin: 4px 8px 0 4px;
    flex: none;
    background: radial-gradient(#9fb0c0 1px, transparent 1px) 0 0 / 3px 3px;
}

.task {
    flex: 1 1 47px;
    height: 12px;
    padding: 0 10px;
    border-top: 1px solid #d0d8e0;
    border-left: 1px solid #c0cad4;
    border-radius: 3px 3px 0 0;
    background: linear-gradient(90deg, #a4b2be, #7589a0);
    overflow: hidden;
}

.task svg {
    width: 20px;
    height: 12px;
}

.group {
    flex: 7 1 326px;
    display: flex;
}

.group.small {
    flex: 4 1 188px;
}

.tray {
    width: 180px;
    flex: none;
    display: flex;
    background: linear-gradient(#3c5574, #14233a);
}

.tray svg {
    width: 150px;
    height: 12px;
}
```
